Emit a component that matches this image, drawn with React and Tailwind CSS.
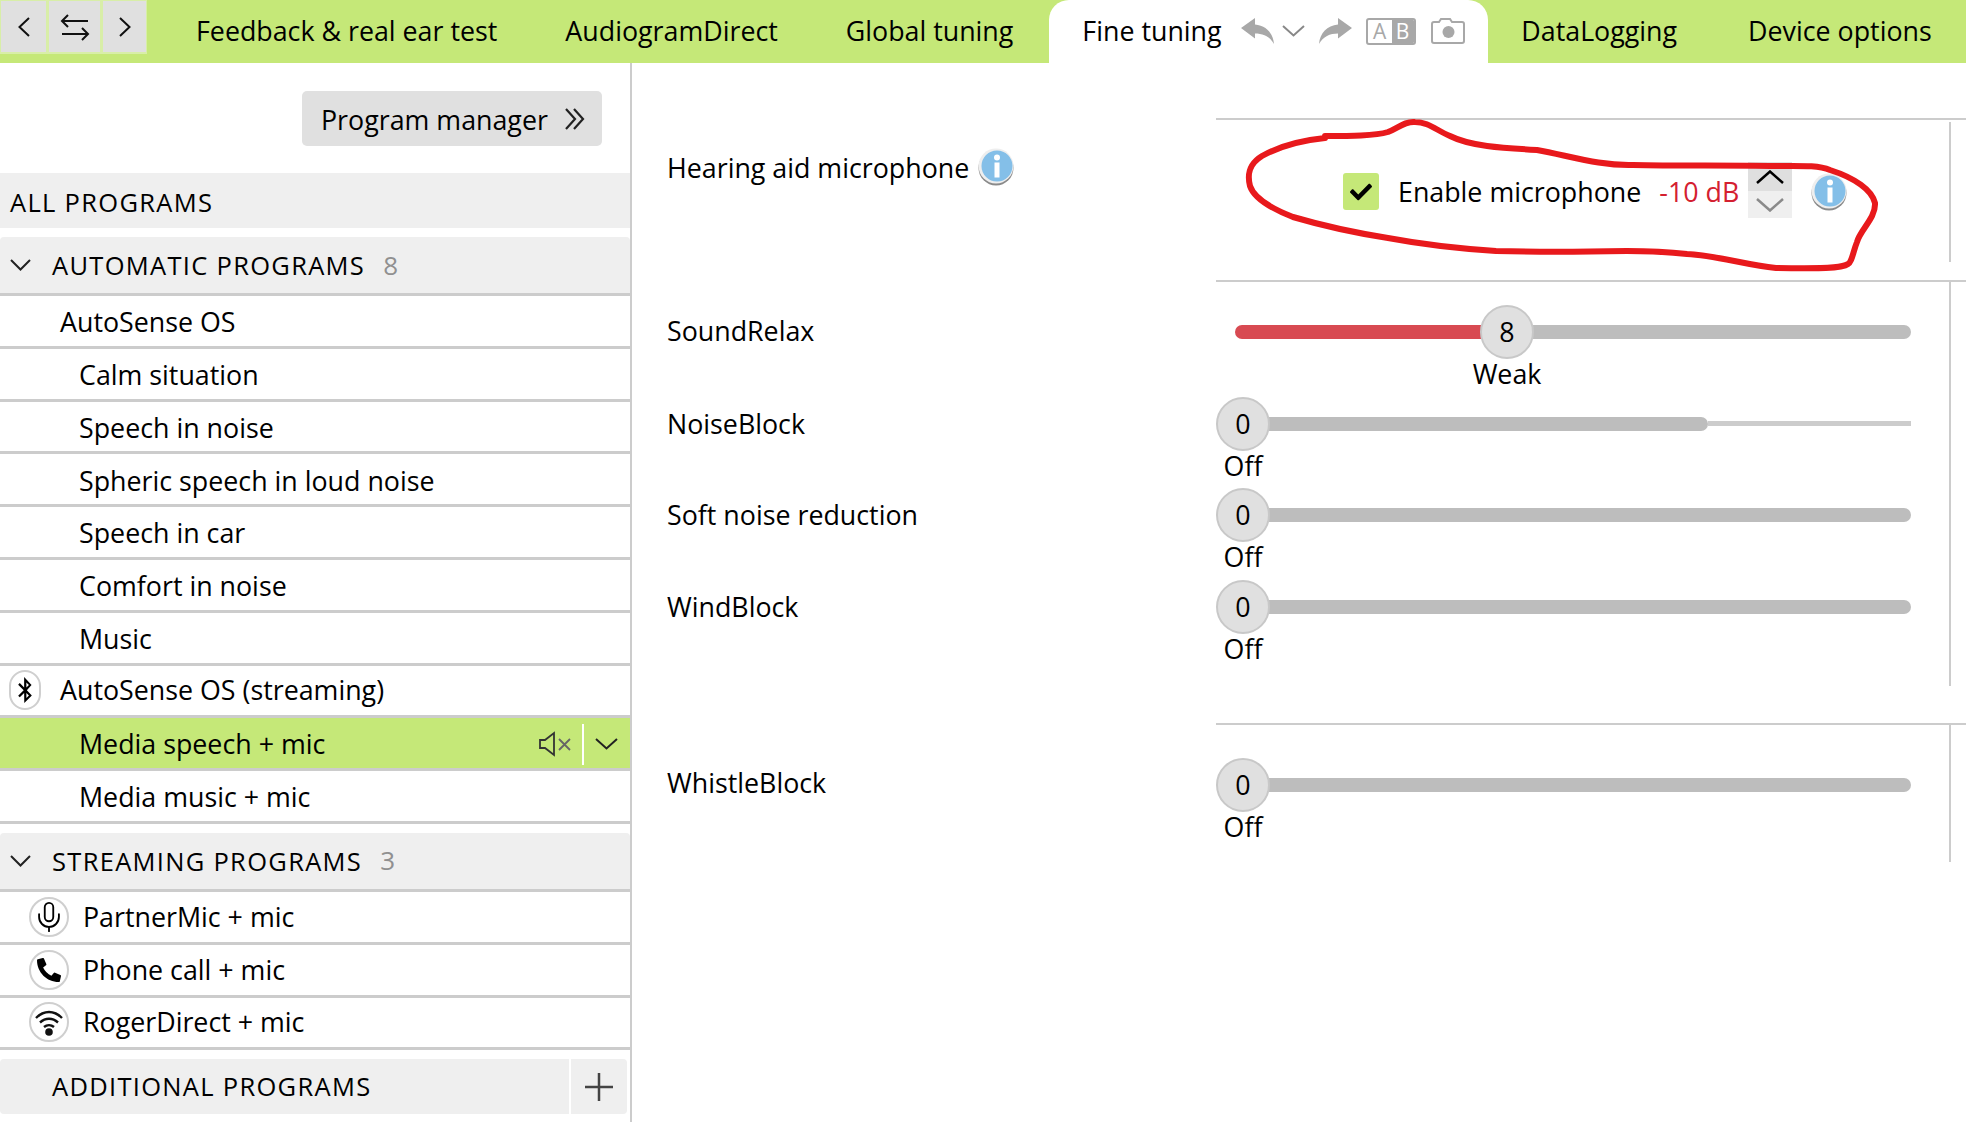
import React from "react";
import { FaBluetoothB, FaPhoneAlt, FaCheck } from "react-icons/fa";
import { Mic } from "lucide-react";

const TABS_LEFT = ["Feedback & real ear test", "AudiogramDirect", "Global tuning"];
const TABS_RIGHT = [
  { label: "DataLogging", className: "pl-[33px] pr-[38px]" },
  { label: "Device options", className: "pl-[33px] pr-[32px]" },
];
const AUTO_ROWS = ["Calm situation", "Speech in noise", "Spheric speech in loud noise", "Speech in car", "Comfort in noise", "Music"];

// lucide's chevrons are too small for their box here, so draw them tight
function Chevron({ w = 22, h = 12, stroke = "#222", sw = 2, className = "" }) {
  return (
    <svg width={w} height={h} viewBox={`0 0 ${w} ${h}`} fill="none" stroke={stroke} strokeWidth={sw} className={`shrink-0 ${className}`}>
      <path d={`M1 1L${w / 2} ${h - 1.500}L${w - 1} 1`} />
    </svg>
  );
}

function NavButton({ className, children }) {
  return <div className={`flex h-[51px] items-center justify-center bg-[#e0e0e0] ${className}`}>{children}</div>;
}

function UndoIcon({ className = "" }) {
  return (
    <svg width="33" height="26" viewBox="0 0 33 26" fill="#a8a8a8" className={className}>
      <path d="M0 10L14 0V6.500C25 7.500 32 15 33 26C29 18.500 22 15.500 14 15.500V20.500Z" />
    </svg>
  );
}

function TopBar() {
  return (
    <div className="flex h-[63px] items-stretch bg-[#c5e878] text-[26.8px] text-black">
      <div className="flex h-[54px] w-[147px] gap-[3px] bg-[#d8eea8] pl-[1px] pt-[1px]">
        <NavButton className="w-[45px]"><Chevron w={20} h={12} stroke="#111" className="rotate-90" /></NavButton>
        <NavButton className="w-[51px]">
          <svg width="32" height="28" viewBox="0 0 32 28" fill="none" stroke="#111" strokeWidth="2">
            <path d="M29 8H3M9 2 3 8l6 6M3 21h26M23 15l6 6-6 6" />
          </svg>
        </NavButton>
        <NavButton className="w-[43px]"><Chevron w={20} h={12} stroke="#111" className="-rotate-90" /></NavButton>
      </div>
      <div className="ml-[15px] flex">
        {TABS_LEFT.map((t) => (
          <div key={t} className="flex items-center whitespace-nowrap px-[34px] pb-[1px]">{t}</div>
        ))}
      </div>
      <div className="ml-[2px] flex w-[439px] shrink-0 items-center rounded-t-[20px] bg-white pb-[1px] pl-[33px]">
        <span>Fine tuning</span>
        <div className="ml-[19px] flex items-center">
          <UndoIcon />
          <Chevron w={23} h={12} stroke="#888" className="ml-[8px]" />
          <UndoIcon className="ml-[14px] -scale-x-100" />
          <div className="ml-[14px] flex h-[27px] w-[50px] overflow-hidden rounded-[3px] border-2 border-[#a8a8a8] text-[21px] leading-[23px]">
            <span className="w-[24px] text-center text-[#a8a8a8]">A</span>
            <span className="flex-1 bg-[#a8a8a8] text-center text-white">B</span>
          </div>
          <svg width="35" height="28" viewBox="0 0 35 28" fill="none" stroke="#a8a8a8" strokeWidth="2" className="ml-[15px]">
            <path d="M3 5h5l2-3h9l2 3h10a2 2 0 0 1 2 2v17a2 2 0 0 1-2 2H3a2 2 0 0 1-2-2V7a2 2 0 0 1 2-2z" />
            <circle cx="17.500" cy="15" r="6" fill="#a8a8a8" stroke="none" />
          </svg>
        </div>
      </div>
      <div className="flex">
        {TABS_RIGHT.map((t) => (
          <div key={t.label} className={`flex items-center whitespace-nowrap pb-[1px] ${t.className}`}>{t.label}</div>
        ))}
      </div>
    </div>
  );
}

function SectionHeader({ label, count }) {
  return (
    <div className="mt-[9px] flex h-[59px] items-center rounded-t-[4px] border-b-[3px] border-[#cccccc] bg-[#efefef] pl-[10px]">
      <Chevron w={21} h={12} />
      <span className="ml-[21px] text-[25.5px] tracking-[1.3px]">{label}</span>
      <span className="ml-[18px] text-[26px] text-[#909090]">{count}</span>
    </div>
  );
}

function Row({ children, className = "pt-[3px]" }) {
  return <div className={`flex h-[52.8px] shrink-0 items-center border-b-[3px] border-[#cccccc] ${className}`}>{children}</div>;
}

function RoundIcon({ className = "w-[40px]", children }) {
  return (
    <div className={`flex h-[40px] shrink-0 items-center justify-center rounded-full border-2 border-[#cfcfcf] bg-white ${className}`}>
      {children}
    </div>
  );
}

function IconRow({ icon, label }) {
  return (
    <Row className="pl-[29px]">
      <RoundIcon>{icon}</RoundIcon>
      <span className="ml-[14px]">{label}</span>
    </Row>
  );
}

function Sidebar() {
  return (
    <div className="w-[632px] shrink-0 border-r-2 border-[#cccccc] text-[26.8px] text-black">
      <div className="flex h-[110px] items-start justify-end pr-[28px] pt-[28px]">
        <div className="flex h-[55px] w-[300px] items-center rounded-[5px] bg-[#e0e0e0] pl-[19px]">
          <span className="pt-[4px]">Program manager</span>
          <svg width="20" height="22" viewBox="0 0 20 22" fill="none" stroke="#222" strokeWidth="2.200" className="ml-[17px]">
            <path d="M1 1l9 10-9 10M9 1l9 10-9 10" />
          </svg>
        </div>
      </div>
      <div className="flex h-[55px] items-center bg-[#efefef] pl-[10px] pt-[4px] text-[25.5px] tracking-[1.3px]">ALL PROGRAMS</div>
      <SectionHeader label="AUTOMATIC PROGRAMS" count="8" />
      <Row className="pl-[60px] pt-[3px]">AutoSense OS</Row>
      {AUTO_ROWS.map((r) => (
        <Row key={r} className="pl-[79px] pt-[3px]">{r}</Row>
      ))}
      <Row className="pl-[9px]">
        <RoundIcon className="w-[32px]"><FaBluetoothB size={26} /></RoundIcon>
        <span className="ml-[19px]">AutoSense OS (streaming)</span>
      </Row>
      <Row className="bg-[#c5e878] pl-[79px] pt-[2px]">
        <span className="flex-1">Media speech + mic</span>
        <svg width="34" height="26" viewBox="0 0 34 26" fill="none" stroke="#333" strokeWidth="1.800">
          <path d="M2 9h5l9-7v22l-9-7H2z" />
          <path d="M21 8l11 11M32 8L21 19" stroke="#666" />
        </svg>
        <div className="ml-[10px] h-[41px] w-[2px] bg-white" />
        <Chevron w={23} h={12} className="ml-[11px] mr-[12px]" />
      </Row>
      <Row className="pl-[79px] pt-[3px]">Media music + mic</Row>
      <SectionHeader label="STREAMING PROGRAMS" count="3" />
      <IconRow icon={<Mic size={34} strokeWidth={1.300} />} label="PartnerMic + mic" />
      <IconRow icon={<FaPhoneAlt size={24} />} label="Phone call + mic" />
      <IconRow
        icon={
          <svg width="30" height="30" viewBox="0 0 30 30" fill="none" stroke="#111" strokeWidth="2.400">
            <path d="M2 11c8-8 18-8 26 0M6 15.500c5.500-5 12.500-5 18 0M10 20c3-2.500 7-2.500 10 0" />
            <circle cx="15" cy="25" r="3.800" fill="#111" stroke="none" />
          </svg>
        }
        label="RogerDirect + mic"
      />
      <div className="mt-[9px] flex h-[55px] gap-[2px] pr-[3px]">
        <div className="flex flex-1 items-center rounded-l-[4px] bg-[#efefef] pb-[2px] pl-[52px] text-[25.5px] tracking-[1.3px]">ADDITIONAL PROGRAMS</div>
        <div className="flex w-[56px] items-center justify-center rounded-r-[4px] bg-[#efefef]">
          <svg width="28" height="28" viewBox="0 0 28 28" stroke="#444" strokeWidth="2.500"><path d="M14 0v28M0 14h28" /></svg>
        </div>
      </div>
    </div>
  );
}

function InfoIcon() {
  return (
    <svg width="36" height="38" viewBox="0 0 36 38" className="shrink-0">
      <circle cx="18" cy="20" r="17.500" fill="#8a8a8a" />
      <circle cx="18" cy="18" r="17.500" fill="#eeeeee" />
      <circle cx="19" cy="18" r="15.500" fill="#84bfe8" />
      <circle cx="19" cy="9.500" r="3" fill="#fff" />
      <rect x="16.500" y="14.500" width="5" height="15" fill="#fff" />
    </svg>
  );
}

function Slider({ value, caption, fill = 0, thin = 0 }) {
  return (
    <div className="flex h-[54px] w-[695px] items-start">
      {fill > 0 && <div className="-mr-[2px] ml-[19px] mt-[20px] h-[14px] rounded-l-full bg-[#d84a52]" style={{ width: fill }} />}
      <div className="z-10 flex w-[54px] shrink-0 flex-col items-center">
        <div className="flex h-[54px] w-[54px] items-center justify-center rounded-full border-2 border-[#c8c8c8] bg-[#e0e0e0]">{value}</div>
        <div className="mt-[-5px]">{caption}</div>
      </div>
      {thin > 0 ? (
        <div className="-ml-[2px] flex flex-1 items-center pt-[20px]">
          <div className="h-[14px] rounded-r-full bg-[#bdbdbd]" style={{ width: 440 }} />
          <div className="h-[5px] flex-1 bg-[#cccccc]" />
        </div>
      ) : (
        <div className="-ml-[2px] mt-[20px] h-[14px] flex-1 rounded-r-full bg-[#bdbdbd]" />
      )}
    </div>
  );
}

function SliderRow({ label, labelClass = "pt-[7px]", ...slider }) {
  return (
    <div className="flex h-[91.6px] shrink-0">
      <div className={`w-[584px] shrink-0 pl-[35px] ${labelClass}`}>{label}</div>
      <Slider {...slider} />
    </div>
  );
}

function Scribble() {
  return (
    <svg className="pointer-events-none absolute left-0 top-0" width="1966" height="300" fill="none" stroke="#e8191c" strokeWidth="6" strokeLinejoin="round" strokeLinecap="round">
      <path d="M1325 136 C1350 136 1375 136 1388 132 C1398 128 1405 121 1415 122 C1428 122 1436 130 1450 136 C1470 146 1500 148 1537 150 C1570 156 1600 166 1633 165 C1680 166 1730 165 1776 166 C1800 166 1818 165 1830 170 C1855 178 1872 190 1875 203 C1876 218 1860 230 1857 242 C1853 252 1852 262 1848 264 C1840 270 1800 268 1776 268 C1745 265 1715 255 1687 254 C1660 251 1640 251 1627 251 C1580 252 1530 252 1496 251 C1450 248 1420 244 1388 238 C1350 232 1310 222 1293 217 C1270 208 1254 198 1250 186 C1247 174 1249 164 1262 156 C1280 146 1305 140 1325 138" />
    </svg>
  );
}

function Panel() {
  return (
    <div className="flex-1 pt-[55px] text-[26.8px] text-black">
      {/* Microphone */}
      <div className="flex h-[162px]">
        <div className="flex w-[584px] shrink-0 items-start gap-[9px] pl-[35px] pt-[30px]">
          <span>Hearing aid microphone</span>
          <InfoIcon />
        </div>
        <div className="flex-1 border-t-2 border-[#cccccc] pr-[15px] pt-[2px]">
          <div className="flex h-[140px] items-start border-r-2 border-[#cccccc] pl-[127px] pt-[40px]">
            <div className="mt-[11px] flex h-[37px] w-[36px] items-center justify-center rounded-[3px] bg-[#c5e878]">
              <FaCheck size={22} />
            </div>
            <span className="ml-[19px] mt-[10px]">Enable microphone</span>
            <span className="ml-[18px] mt-[10px] text-[#d42030]">-10 dB</span>
            <div className="ml-[9px] flex w-[44px] flex-col">
              <div className="flex h-[29px] items-center justify-center bg-[#dfdfdf]"><Chevron w={28} h={14} stroke="#000" sw={2.500} className="rotate-180" /></div>
              <div className="flex h-[27px] items-center justify-center bg-[#efefef]"><Chevron w={28} h={14} stroke="#8a8a8a" sw={2.500} /></div>
            </div>
            <div className="ml-[19px] mt-[11px]"><InfoIcon /></div>
          </div>
        </div>
      </div>
      {/* Sliders */}
      <div className="relative flex h-[443px] flex-col pt-[25px]">
        <div className="absolute left-[584px] right-0 top-0 h-[2px] bg-[#cccccc]" />
        <div className="absolute right-[15px] top-[2px] h-[404px] w-[2px] bg-[#cccccc]" />
        <SliderRow label="SoundRelax" labelClass="pt-[6px]" value="8" caption="Weak" fill={247} />
        <SliderRow label="NoiseBlock" value="0" caption="Off" thin={1} />
        <SliderRow label="Soft noise reduction" value="0" caption="Off" />
        <SliderRow label="WindBlock" value="0" caption="Off" />
      </div>
      {/* Whistle */}
      <div className="relative h-[139px] pt-[35px]">
        <div className="absolute left-[584px] right-0 top-0 h-[2px] bg-[#cccccc]" />
        <div className="absolute right-[15px] top-[2px] h-[137px] w-[2px] bg-[#cccccc]" />
        <SliderRow label="WhistleBlock" labelClass="pt-[5px]" value="0" caption="Off" />
      </div>
    </div>
  );
}

export default function App() {
  return (
    <div className="relative h-[1122px] w-[1966px] overflow-hidden bg-white font-['Open_Sans',sans-serif]">
      <TopBar />
      <div className="flex h-[1059px]">
        <Sidebar />
        <Panel />
      </div>
      <Scribble />
    </div>
  );
}
